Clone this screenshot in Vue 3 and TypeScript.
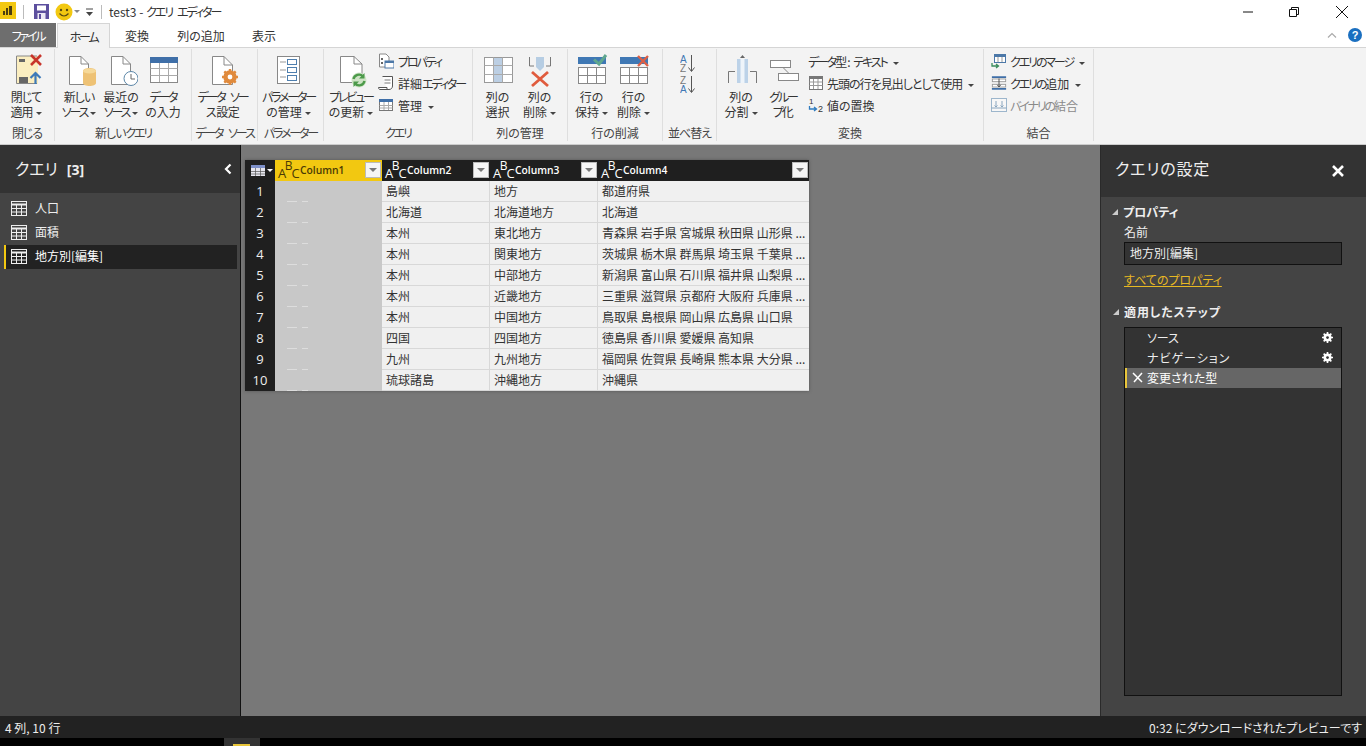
<script setup lang="ts">
interface Row { n: number; a: string; b: string; c: string }
const rows: Row[] = [
  { n: 1, a: '島嶼', b: '地方', c: '都道府県' },
  { n: 2, a: '北海道', b: '北海道地方', c: '北海道' },
  { n: 3, a: '本州', b: '東北地方', c: '青森県 岩手県 宮城県 秋田県 山形県 ...' },
  { n: 4, a: '本州', b: '関東地方', c: '茨城県 栃木県 群馬県 埼玉県 千葉県 ...' },
  { n: 5, a: '本州', b: '中部地方', c: '新潟県 富山県 石川県 福井県 山梨県 ...' },
  { n: 6, a: '本州', b: '近畿地方', c: '三重県 滋賀県 京都府 大阪府 兵庫県 ...' },
  { n: 7, a: '本州', b: '中国地方', c: '鳥取県 島根県 岡山県 広島県 山口県' },
  { n: 8, a: '四国', b: '四国地方', c: '徳島県 香川県 愛媛県 高知県' },
  { n: 9, a: '九州', b: '九州地方', c: '福岡県 佐賀県 長崎県 熊本県 大分県 ...' },
  { n: 10, a: '琉球諸島', b: '沖縄地方', c: '沖縄県' }
]
const cols = ['Column1', 'Column2', 'Column3', 'Column4']
const queries = ['人口', '面積', '地方別[編集]']
</script>

<template>
  <div class="app">
    <header class="titlebar">
      <svg class="logo" width="16" height="17" viewBox="0 0 16 17">
        <rect width="16" height="17" fill="#f2c811" />
        <path d="M3 13V9h2v4zM6 13V6h2v7zM9 13V4h3v9z" fill="#4a3d10" />
      </svg>
      <span class="qsep"></span>
      <svg class="save" width="15" height="15" viewBox="0 0 15 15">
        <path d="M0 0H15V15H0Z" fill="#5c4f9e" />
        <rect x="3" y="1.500" width="9" height="5" fill="#fff" />
        <rect x="3.500" y="9" width="8" height="6" fill="#ece9f5" />
        <rect x="5" y="10" width="2" height="5" fill="#5c4f9e" />
      </svg>
      <svg class="smile" width="18" height="18" viewBox="0 0 18 18">
        <circle cx="9" cy="9" r="8.500" fill="#f2c811" />
        <circle cx="6" cy="7" r="1.200" fill="#5a4a10" />
        <circle cx="12" cy="7" r="1.200" fill="#5a4a10" />
        <path d="M4.500 10.500Q9 15.500 13.500 10.500" fill="none" stroke="#5a4a10" stroke-width="1.200" />
      </svg>
      <span class="caret grey"></span>
      <svg class="custom" width="9" height="8" viewBox="0 0 9 8"><path d="M1 1H8" stroke="#444" /><path d="M1 4H8L4.500 8Z" fill="#444" /></svg>
      <span class="qsep wide"></span>
      <span class="wintitle">test3 - <span class="k">クエリ エディター</span></span>
      <span class="spacer"></span>
      <svg class="winbtn" width="12" height="12" viewBox="0 0 12 12"><path d="M1 6H11" stroke="#111" /></svg>
      <svg class="winbtn" width="12" height="12" viewBox="0 0 12 12"><path d="M1.500 3.500H8.500V10.500H1.500ZM3.500 3.500V1.500H10.500V8.500H8.500" fill="none" stroke="#111" /></svg>
      <svg class="winbtn close" width="14" height="14" viewBox="0 0 14 14"><path d="M1 1L13 13M13 1L1 13" stroke="#111" /></svg>
    </header>

    <nav class="tabs">
      <span class="tab file k">ファイル</span>
      <span class="tab home k">ホーム</span>
      <span class="tab t3">変換</span>
      <span class="tab t4">列の追加</span>
      <span class="tab t5">表示</span>
      <span class="spacer"></span>
      <svg class="collapse" width="10" height="6" viewBox="0 0 10 6"><path d="M1 5.500L5 1.500L9 5.500" fill="none" stroke="#aaa" stroke-width="1.200" /></svg>
      <span class="help">?</span>
    </nav>

    <section class="ribbon">
      <div class="group g1">
        <div class="body center">
          <button class="big">
            <svg width="34" height="34" viewBox="0 0 34 34">
              <rect x="7" y="2" width="22" height="28" fill="#fbeec0" />
              <path d="M28 2H7.500V29.500H28" fill="none" stroke="#888" />
              <rect x="10" y="5" width="6" height="3" fill="#666" />
              <rect x="10" y="23" width="9" height="6" fill="#666" />
              <path d="M22 1L32 11M32 1L22 11" stroke="#c8352b" stroke-width="2.600" />
              <path d="M26.500 30V19M21.500 24L26.500 19L31.500 24" fill="none" stroke="#3d7ab8" stroke-width="2.200" />
            </svg>
            <span class="m">閉じて<br />適用<i class="caret"></i></span>
          </button>
        </div>
        <div class="label m">閉じる</div>
      </div>

      <div class="group g2">
        <div class="body center">
          <button class="big">
            <svg width="34" height="34" viewBox="0 0 34 34">
              <path d="M7.500 2.500H19L26.500 10V30.500H7.500Z" fill="#fff" stroke="#888" />
              <path d="M19 2.500V10H26.500" fill="none" stroke="#888" />
              <path d="M21 17C21 13 34 13 34 17V29C34 33 21 33 21 29Z" fill="#eec275" />
              <ellipse cx="27.500" cy="17" rx="6.500" ry="2.500" fill="#f6d999" />
            </svg>
            <span class="m">新しい<br /><span class="k">ソース</span><i class="caret"></i></span>
          </button>
          <button class="big">
            <svg width="34" height="34" viewBox="0 0 34 34">
              <path d="M7.500 2.500H19L26.500 10V30.500H7.500Z" fill="#fff" stroke="#888" />
              <path d="M19 2.500V10H26.500" fill="none" stroke="#888" />
              <circle cx="27" cy="24.500" r="7" fill="#fff" stroke="#5d87a8" />
              <path d="M27 20V25H31" fill="none" stroke="#666" />
            </svg>
            <span>最近の<br /><span class="k">ソース</span><i class="caret"></i></span>
          </button>
          <button class="big">
            <svg width="34" height="34" viewBox="0 0 34 34">
              <rect x="4.500" y="3.500" width="27" height="25" fill="#fff" stroke="#888" />
              <rect x="4" y="3" width="28" height="6" fill="#3f6fa8" />
              <path d="M4.500 14.500H31.500M4.500 21.500H31.500M13.500 9V28M22.500 9V28" stroke="#aaa" />
            </svg>
            <span><span class="k">データ</span><br />の入力</span>
          </button>
        </div>
        <div class="label m">新しい<span class="k">クエリ</span></div>
      </div>

      <div class="group g3">
        <div class="body center">
          <button class="big wide">
            <svg width="34" height="34" viewBox="0 0 34 34">
              <path d="M6.500 2.500H18L26.500 11V30.500H6.500Z" fill="#fff" stroke="#888" />
              <path d="M18 2.500V11H26.500" fill="none" stroke="#888" />
              <circle cx="24" cy="23" r="5" fill="#fff" stroke="#e08a3c" stroke-width="3.400" />
              <path d="M24 15V31M16 23H32M18.300 17.300L29.700 28.700M29.700 17.300L18.300 28.700" stroke="#e08a3c" stroke-width="2.400" />
              <circle cx="24" cy="23" r="2.400" fill="#fff" />
            </svg>
            <span class="k">データ ソー<br /><span class="m">ス設定</span></span>
          </button>
        </div>
        <div class="label k">データ ソース</div>
      </div>

      <div class="group g4">
        <div class="body center">
          <button class="big wide">
            <svg width="34" height="34" viewBox="0 0 34 34">
              <rect x="5.500" y="2.500" width="22" height="27" fill="#fff" stroke="#888" />
              <path d="M8 8H14M8 16H14M8 23H14" stroke="#999" />
              <rect x="15.500" y="5.500" width="9" height="5" fill="#fff" stroke="#4f7fae" />
              <rect x="15.500" y="13.500" width="9" height="5" fill="#fff" stroke="#4f7fae" />
              <rect x="15.500" y="21.500" width="9" height="5" fill="#fff" stroke="#4f7fae" />
            </svg>
            <span><span class="k">パラメーター</span><br />の管理<i class="caret"></i></span>
          </button>
        </div>
        <div class="label k">パラメーター</div>
      </div>

      <div class="group g5">
        <div class="body row">
          <button class="big first">
            <svg width="34" height="34" viewBox="0 0 34 34">
              <path d="M6.500 2.500H20L28 10V28.500H6.500Z" fill="#fff" stroke="#888" />
              <path d="M20 2.500V10H28" fill="none" stroke="#888" />
              <circle cx="25" cy="26" r="7.500" fill="#cfe3c6" />
              <path d="M19.500 25A5.500 5.500 0 0 1 29 22.500M30.500 27A5.500 5.500 0 0 1 21 29.500" fill="none" stroke="#4c9a4a" stroke-width="2.400" />
              <path d="M30.500 19V24.500H25M19.500 33V27.500H25" fill="#4c9a4a" />
            </svg>
            <span><span class="k">プレビュー</span><br />の更新<i class="caret"></i></span>
          </button>
          <div class="stack s1">
            <div class="small">
              <svg width="16" height="16" viewBox="0 0 16 16">
                <path d="M1.500 1H8L11 4V14H1.500Z" fill="#fff" stroke="#888" />
                <rect x="3" y="5" width="2" height="2" fill="#666" /><rect x="3" y="9" width="2" height="2" fill="#666" />
                <rect x="7" y="8" width="9" height="7" fill="#fff" stroke="#4c78a8" />
                <rect x="7" y="8" width="9" height="2" fill="#4c78a8" />
              </svg>
              <span class="k">プロパティ</span>
            </div>
            <div class="small">
              <svg width="16" height="16" viewBox="0 0 16 16">
                <path d="M4.500 1.500H14.500V11C14.500 13 13 14.500 11 14.500H2C1 14.500 .5 13.500 .5 12.500H9V14" fill="#fff" stroke="#555" />
                <path d="M6.500 5H12.500M6.500 8H12.500" stroke="#777" />
              </svg>
              <span>詳細<span class="k">エディター</span></span>
            </div>
            <div class="small">
              <svg width="16" height="16" viewBox="0 0 16 16">
                <rect x="1.500" y="2.500" width="13" height="11" fill="#fff" stroke="#777" />
                <rect x="1" y="2" width="14" height="3" fill="#3f6fa8" />
                <path d="M1.500 8.500H14.500M1.500 11H14.500M6 5V13M10.500 5V13" stroke="#aaa" />
              </svg>
              <span>管理<i class="caret gap"></i></span>
            </div>
          </div>
        </div>
        <div class="label k">クエリ</div>
      </div>

      <div class="group g6">
        <div class="body center">
          <button class="big">
            <svg width="34" height="34" viewBox="0 0 34 34">
              <rect x="3.500" y="3.500" width="28" height="25" fill="#fff" stroke="#999" />
              <rect x="12" y="4" width="9" height="24" fill="#bccfe4" />
              <path d="M3.500 11.500H31.500M3.500 20.500H31.500M12.500 3.500V28.500M21.500 3.500V28.500" stroke="#aaa" />
            </svg>
            <span>列の<br />選択</span>
          </button>
          <button class="big">
            <svg width="34" height="34" viewBox="0 0 34 34">
              <path d="M6.500 3V12H11M27.500 3V12H23" fill="none" stroke="#777" />
              <path d="M13 3H21V13L17 17L13 13Z" fill="#b6cde3" />
              <path d="M9 18L25 32M25 18L9 32" stroke="#e05b3d" stroke-width="2.800" />
            </svg>
            <span>列の<br />削除<i class="caret"></i></span>
          </button>
        </div>
        <div class="label">列の管理</div>
      </div>

      <div class="group g7">
        <div class="body center">
          <button class="big">
            <svg width="34" height="34" viewBox="0 0 34 34">
              <rect x="3" y="3" width="28" height="7" fill="#3f78b4" />
              <rect x="3.500" y="13.500" width="27" height="16" fill="#fff" stroke="#888" />
              <path d="M3.500 21.500H30.500M12.500 13.500V29.500M21.500 13.500V29.500" stroke="#888" />
              <path d="M19 5.500L24 10L31 1" fill="none" stroke="#5fa78f" stroke-width="3" />
            </svg>
            <span>行の<br />保持<i class="caret"></i></span>
          </button>
          <button class="big">
            <svg width="34" height="34" viewBox="0 0 34 34">
              <rect x="3" y="3" width="28" height="7" fill="#3f78b4" />
              <rect x="3.500" y="13.500" width="27" height="16" fill="#fff" stroke="#888" />
              <path d="M3.500 21.500H30.500M12.500 13.500V29.500M21.500 13.500V29.500" stroke="#888" />
              <path d="M21 2L31 12M31 2L21 12" stroke="#dd5f45" stroke-width="2.400" />
            </svg>
            <span>行の<br />削除<i class="caret"></i></span>
          </button>
        </div>
        <div class="label">行の削減</div>
      </div>

      <div class="group g8">
        <div class="body sort">
          <svg width="16" height="20" viewBox="0 0 16 20">
            <text x="0" y="8.500" class="sa">A</text><text x="0" y="18" class="sz">Z</text>
            <path d="M11.500 1V17M8.500 13.500L11.500 17.500L14.500 13.500" fill="none" stroke="#555" />
          </svg>
          <svg width="16" height="20" viewBox="0 0 16 20">
            <text x="0" y="8.500" class="sz">Z</text><text x="0" y="18" class="sa">A</text>
            <path d="M11.500 1V17M8.500 13.500L11.500 17.500L14.500 13.500" fill="none" stroke="#555" />
          </svg>
        </div>
        <div class="label m">並べ替え</div>
      </div>

      <div class="group g9">
        <div class="body row">
          <button class="big">
            <svg width="34" height="34" viewBox="0 0 34 34">
              <path d="M4.500 29V17.500H11M32.500 29V17.500H26" fill="none" stroke="#777" />
              <rect x="13" y="5" width="11" height="24" fill="#bcd2e8" />
              <rect x="16.500" y="5" width="4" height="24" fill="#eef4fa" />
              <path d="M18.500 1L16 4H21Z" fill="#666" />
            </svg>
            <span>列の<br />分割<i class="caret"></i></span>
          </button>
          <button class="big">
            <svg width="34" height="34" viewBox="0 0 34 34">
              <rect x="4.500" y="6.500" width="20" height="7" fill="#fff" stroke="#888" />
              <rect x="12.500" y="19.500" width="20" height="7" fill="#fff" stroke="#888" />
              <path d="M17 13.500L23 19.500" stroke="#888" />
            </svg>
            <span class="k">グルー<br />プ<span class="plain">化</span></span>
          </button>
          <div class="stack s2">
            <div class="small"><span><span class="k">データ</span>型: <span class="k">テキスト</span><i class="caret gap"></i></span></div>
            <div class="small">
              <svg width="16" height="16" viewBox="0 0 16 16">
                <rect x="1.500" y="1.500" width="13" height="13" fill="#fff" stroke="#777" />
                <rect x="1" y="1" width="14" height="3" fill="#777" />
                <path d="M1.500 7H14.500M1.500 10.500H14.500M5.500 4V14M10 4V14" stroke="#999" />
              </svg>
              <span class="m">先頭の行を見出しとして使用<i class="caret gap"></i></span>
            </div>
            <div class="small">
              <svg width="16" height="16" viewBox="0 0 16 16">
                <text x="1" y="7" class="n1">1</text>
                <text x="10" y="15" class="n2">2</text>
                <path d="M1.500 9V12H8M6 10L8.500 12L6 14" fill="none" stroke="#2f7cc0" stroke-width="1.300" />
              </svg>
              <span>値の置換</span>
            </div>
          </div>
        </div>
        <div class="label">変換</div>
      </div>

      <div class="group g10">
        <div class="body">
          <div class="stack s3">
            <div class="small">
              <svg width="16" height="16" viewBox="0 0 16 16">
                <rect x="3.500" y="1.500" width="11" height="8" fill="#fff" stroke="#4c78a8" />
                <rect x="3" y="1" width="12" height="3" fill="#4c78a8" />
                <path d="M7 4V9M11 4V9" stroke="#999" />
                <path d="M1 10V13H7M5 11L7.500 13L5 15" fill="none" stroke="#3a8c5c" stroke-width="1.300" />
              </svg>
              <span class="k">クエリのマージ<i class="caret gap"></i></span>
            </div>
            <div class="small">
              <svg width="16" height="16" viewBox="0 0 18 16">
                <path d="M1 1.500H17M1 14.500H17" stroke="#3f6fa8" stroke-width="2" />
                <rect x="1.500" y="3.500" width="15" height="3" fill="#fff" stroke="#999" />
                <rect x="1.500" y="9.500" width="15" height="3" fill="#fff" stroke="#999" />
                <path d="M9 3V12M7 10L9 12.500L11 10" fill="none" stroke="#444" />
              </svg>
              <span><span class="k">クエリの</span>追加<i class="caret gap"></i></span>
            </div>
            <div class="small off">
              <svg width="16" height="16" viewBox="0 0 16 16">
                <rect x=".5" y="1.500" width="15" height="13" fill="#f7f7f7" stroke="#9db6cc" />
                <path d="M.5 11H15.500M5 4V10M3.500 8.500L5 10L6.500 8.500M11 4V10M9.500 8.500L11 10L12.500 8.500" fill="none" stroke="#8aa6bf" />
              </svg>
              <span><span class="k">バイナリの</span>結合</span>
            </div>
          </div>
        </div>
        <div class="label">結合</div>
      </div>
    </section>

    <main class="main">
      <aside class="left">
        <div class="lhead">
          <span class="ltitle">クエリ<b>[3]</b></span>
          <svg width="8" height="12" viewBox="0 0 8 12"><path d="M6.500 1.500L2 6L6.500 10.500" fill="none" stroke="#fff" stroke-width="2.200" /></svg>
        </div>
        <ul class="qlist">
          <li v-for="(q, i) in queries" :key="q" :class="{ sel: i === 2 }">
            <svg width="16" height="15" viewBox="0 0 16 15">
              <rect x=".5" y=".5" width="15" height="14" fill="none" stroke="#eee" />
              <path d="M.5 3.500H15.500" stroke="#eee" stroke-width="2" />
              <path d="M.5 7.500H15.500M.5 11H15.500M5.500 3V14.500M10.500 3V14.500" stroke="#eee" />
            </svg>
            <span>{{ q }}</span>
          </li>
        </ul>
      </aside>

      <div class="center-pane">
        <div class="grid">
          <div class="hcorner">
            <svg width="14" height="11" viewBox="0 0 14 11">
              <rect width="14" height="11" fill="#e6e6ee" />
              <rect width="14" height="3" fill="#7d8fc8" />
              <path d="M0 6.500H14M0 9H14M4.500 3V11M9.500 3V11" stroke="#555" stroke-width=".7" />
            </svg>
            <i class="caret white"></i>
          </div>
          <div v-for="(c, i) in cols" :key="c" class="hcell" :class="{ active: i === 0 }">
            <span class="abc"><em>A</em><em class="up">B</em><em>C</em></span>
            <span class="cname">{{ c }}</span>
            <span class="filter"><i></i></span>
          </div>
          <template v-for="r in rows" :key="r.n">
            <div class="num">{{ r.n }}</div>
            <div class="cell redact"></div>
            <div class="cell">{{ r.a }}</div>
            <div class="cell">{{ r.b }}</div>
            <div class="cell last">{{ r.c }}</div>
          </template>
        </div>
      </div>

      <aside class="right">
        <div class="rhead">
          <span>クエリの設定</span>
          <svg width="12" height="12" viewBox="0 0 12 12"><path d="M1 1L11 11M11 1L1 11" stroke="#fff" stroke-width="2.600" /></svg>
        </div>
        <div class="rbody">
          <div class="sect"><i class="tri"></i>プロパティ</div>
          <div class="fname">名前</div>
          <div class="input">地方別[編集]</div>
          <a class="link">すべてのプロパティ</a>
          <div class="sect second"><i class="tri"></i>適用したステップ</div>
          <div class="steps">
            <div class="step">
              <span>ソース</span>
              <svg class="gear" width="11" height="11" viewBox="0 0 12 12"><circle cx="6" cy="6" r="3.200" fill="none" stroke="#fff" stroke-width="2.400" /><path d="M6 0V12M0 6H12M1.800 1.800L10.200 10.200M10.200 1.800L1.800 10.200" stroke="#fff" stroke-width="1.800" /><circle cx="6" cy="6" r="1.500" fill="#333" /></svg>
            </div>
            <div class="step">
              <span class="wider">ナビゲーション</span>
              <svg class="gear" width="11" height="11" viewBox="0 0 12 12"><circle cx="6" cy="6" r="3.200" fill="none" stroke="#fff" stroke-width="2.400" /><path d="M6 0V12M0 6H12M1.800 1.800L10.200 10.200M10.200 1.800L1.800 10.200" stroke="#fff" stroke-width="1.800" /><circle cx="6" cy="6" r="1.500" fill="#333" /></svg>
            </div>
            <div class="step cur">
              <svg width="11" height="11" viewBox="0 0 11 11"><path d="M1 1L10 10M10 1L2 10" stroke="#fff" stroke-width="1.500" /></svg>
              <span>変更された型</span>
            </div>
          </div>
        </div>
      </aside>
    </main>

    <footer class="status">
      <span>4 列, 10 行</span>
      <span>0:32 にダウンロードされたプレビューです</span>
    </footer>
    <div class="taskbar"><span class="task"><i></i></span></div>
  </div>
</template>

<style scoped>
.app {
  width: 1366px;
  height: 746px;
  overflow: hidden;
  display: flex;
  flex-direction: column;
  background: #fff;
  font: 12px/15px "Noto Sans CJK JP", "Noto Sans", sans-serif;
  font-feature-settings: "palt";
  color: #444;
}
.spacer { flex: 1; }
.k { letter-spacing: -2.200px; word-spacing: 5px; }
.m { letter-spacing: -1px; }
.k .m, .k .plain { letter-spacing: -.5px; }
.small .k, .label.k { letter-spacing: -2.100px; }

.titlebar {
  height: 23px;
  flex: none;
  display: flex;
  align-items: center;
  padding-right: 17px;
}
.logo { margin-top: -2px; }
.qsep { width: 1px; height: 14px; background: #bbb; margin: 0 10px 0 7px; }
.qsep.wide { margin: 0 7px 0 7px; }
.save { margin-right: 6px; }
.custom { margin-left: 5px; }
.wintitle { color: #333; font-size: 12px; white-space: nowrap; }
.wintitle .k { letter-spacing: -2px; word-spacing: 4px; }
.winbtn { margin-left: 34px; }
.winbtn.close { margin-left: 35px; }

.caret {
  display: inline-block;
  width: 0;
  height: 0;
  border: 3px solid transparent;
  border-top: 3px solid #444;
  border-bottom: 0;
  margin-left: 3px;
  vertical-align: 2px;
}
.caret.gap { margin-left: 6px; }
.caret.grey { border-top-color: #888; margin-left: 1px; }
.caret.white { border-top-color: #fff; margin-left: 2px; vertical-align: 0; }

.tabs {
  height: 25px;
  flex: none;
  display: flex;
  align-items: stretch;
  border-bottom: 1px solid #d5d5d5;
  box-sizing: border-box;
  padding-right: 4px;
}
.tab { display: flex; align-items: center; justify-content: center; color: #333; }
.tab.file { width: 56px; background: #6e6e6e; color: #fff; margin-right: 1px; }
.tab.home {
  width: 53px;
  background: #f3f3f3;
  border: 1px solid #d5d5d5;
  border-bottom: 0;
  height: 25px;
  box-sizing: border-box;
}
.tab.t3 { width: 54px; }
.tab.t4 { width: 60px; margin-left: 7px; }
.tab.t5 { width: 52px; margin-left: 7px; }
.collapse { align-self: center; margin-right: 11px; }
.help {
  align-self: center;
  width: 14px;
  height: 14px;
  border-radius: 50%;
  background: #1a6fc0;
  color: #fff;
  font: bold 11px/14px "Liberation Sans", sans-serif;
  text-align: center;
}

.ribbon {
  height: 97px;
  flex: none;
  background: #f3f3f3;
  display: flex;
  padding-top: 1px;
  box-sizing: border-box;
  border-bottom: 1px solid #ccc;
}
.group {
  flex: none;
  box-sizing: border-box;
  height: 92px;
  border-right: 1px solid #dedede;
  display: flex;
  flex-direction: column;
}
.g1 { width: 55px; }
.g2 { width: 137px; }
.g3 { width: 66px; }
.g4 { width: 66px; }
.g5 { width: 149px; }
.g6 { width: 95px; }
.g7 { width: 95px; }
.g8 { width: 54px; }
.g9 { width: 267px; }
.g10 { width: 110px; }
.body { height: 76px; display: flex; }
.body.center { justify-content: center; }
.g1 .body { padding-right: 2px; }
.g2 .body, .g3 .body, .g4 .body { padding-right: 4px; }
.g6 .body { padding-right: 3px; }
.g7 .body { padding-right: 5px; }
.g8 .body { padding-right: 3px; }
.body.row { padding-left: 3px; }
.g5 .body.row { padding-left: 2px; }
.label { height: 16px; line-height: 16px; text-align: center; color: #444; white-space: nowrap; }

.big {
  all: unset;
  width: 42px;
  padding-top: 5px;
  display: flex;
  flex-direction: column;
  align-items: center;
  text-align: center;
  white-space: nowrap;
  color: #333;
}
.big.wide { width: 64px; }
.big.first { width: 50px; margin-right: 2px; }
.big > svg { flex: none; height: 34px; margin-bottom: 1px; }
.big > span { line-height: 15px; }

.stack { display: flex; flex-direction: column; padding-top: 1px; }
.stack.s2 { margin-left: 4px; }
.stack.s3 { margin-left: 7px; }
.small { height: 22px; display: flex; align-items: center; gap: 3px; white-space: nowrap; color: #333; }
.s1 .small { gap: 4px; }
.small.off { color: #8a8a8a; }

.sort { flex-direction: column; align-items: center; padding-top: 5px; gap: 1px; }
.sort text { font: 10px "Liberation Sans", sans-serif; }
.sa { fill: #3f78b4; }
.sz { fill: #777; }
.n1, .n2 { font: 8px "Liberation Sans", sans-serif; fill: #333; }
.n2 { font-size: 9px; }

.main { flex: 1; display: flex; min-height: 0; background: #787878; }
.left {
  width: 241px;
  flex: none;
  box-sizing: border-box;
  background: #444;
  border-right: 1px solid #111;
  color: #eee;
}
.lhead {
  height: 48px;
  background: #333;
  display: flex;
  align-items: center;
  justify-content: space-between;
  padding: 0 8px 0 15px;
}
.ltitle { font-size: 16px; color: #eee; line-height: 20px; margin-top: -2px; }
.ltitle b { font: 700 14px "Open Sans", sans-serif; margin-left: 9px; }
.qlist { list-style: none; margin: 0; padding: 4px 3px 0 4px; }
.qlist li {
  height: 24px;
  display: flex;
  align-items: center;
  gap: 8px;
  padding-left: 7px;
  padding-bottom: 1px;
  box-sizing: border-box;
}
.qlist li span { margin-top: -2px; }
.qlist li.sel { background: #222; border-left: 2px solid #f2c811; padding-left: 5px; color: #fff; }

.center-pane { flex: 1; padding: 15px 0 0 4px; }
.grid {
  display: grid;
  width: 564px;
  grid-template-columns: 30px 107px 108px 108px 211px;
  grid-auto-rows: 21px;
  box-shadow: 0 0 3px #555;
}
.hcorner { background: #1f1f1f; display: flex; align-items: center; padding-left: 6px; }
.hcell {
  background: #1f1f1f;
  color: #fff;
  display: flex;
  align-items: center;
  padding: 0 1px 1px 3px;
  font: 600 10.300px "Open Sans", sans-serif;
}
.hcell.active { background: #f2c811; color: #4a3a05; }
.abc { width: 19px; display: flex; font: 13px/12px "Open Sans", sans-serif; margin-right: 3px; padding-top: 6px; }
.abc em { font-style: normal; width: 6.800px; }
.abc em.up { margin-top: -7px; font-size: 12px; }
.cname { flex: 1; }
.filter {
  width: 16px;
  height: 16px;
  background: #f5f5f5;
  border: 1px solid #bbb;
  box-sizing: border-box;
  display: flex;
  align-items: center;
  justify-content: center;
}
.filter i { border: 4px solid transparent; border-top: 4px solid #777; border-bottom: 0; }
.num {
  background: #1f1f1f;
  color: #eee;
  text-align: center;
  font: 13px/21px "Open Sans", sans-serif;
}
.cell {
  background: #f0f0f0;
  border-bottom: 1px solid #d8d8d8;
  border-right: 1px solid #d8d8d8;
  padding: 0 0 0 4px;
  line-height: 20px;
  white-space: nowrap;
  overflow: hidden;
  color: #333;
  font-feature-settings: normal;
}
.cell.last { border-right: 0; }
.cell.redact {
  background:
    linear-gradient(90deg, transparent 12px, #ddd 12px, #ddd 22px, transparent 22px, transparent 27px, #ddd 27px, #ddd 33px, transparent 33px) bottom / 100% 1px no-repeat,
    #c8c8c8;
  border: 0;
}

.right {
  width: 266px;
  flex: none;
  box-sizing: border-box;
  background: #444;
  border-left: 1px solid #2a2a2a;
  color: #eee;
  display: flex;
  flex-direction: column;
}
.rhead {
  height: 52px;
  flex: none;
  background: #333;
  display: flex;
  justify-content: space-between;
  padding: 13px 22px 0 14px;
  box-sizing: border-box;
  font-size: 16px;
  line-height: 20px;
  letter-spacing: .8px;
}
.rhead svg { margin-top: 7px; }
.rbody { flex: 1; padding: 7px 24px 20px 23px; display: flex; flex-direction: column; }
.sect { font-weight: 700; line-height: 15px; color: #eee; position: relative; margin-left: -1px; }
.sect.second { margin-top: 17px; margin-left: 0; letter-spacing: .9px; }
.tri {
  position: absolute;
  left: -11px;
  top: 5px;
  border-style: solid;
  border-width: 0 0 6px 6px;
  border-color: transparent transparent #ccc transparent;
}
.fname { margin-top: 5px; line-height: 15px; }
.input {
  margin-top: 3px;
  height: 23px;
  box-sizing: border-box;
  background: #333;
  border: 1px solid #111;
  padding-left: 5px;
  line-height: 20px;
}
.link { margin-top: 7px; color: #e8b923; text-decoration: underline; line-height: 15px; }
.steps {
  margin-top: 8px;
  flex: 1;
  background: #333;
  border: 1px solid #111;
  box-sizing: border-box;
}
.step {
  height: 20px;
  display: flex;
  align-items: center;
  justify-content: space-between;
  padding: 0 8px 2px 22px;
  box-sizing: border-box;
}
.wider { letter-spacing: 1px; }
.step.cur {
  background: #666;
  border-left: 2px solid #e8c53a;
  justify-content: flex-start;
  gap: 4px;
  padding-left: 5px;
  color: #fff;
}

.status {
  height: 22px;
  flex: none;
  background: #222;
  color: #eee;
  display: flex;
  align-items: center;
  justify-content: space-between;
  padding: 0 4px 0 5px;
}
.taskbar { height: 8px; flex: none; background: #000; padding-left: 224px; }
.task { display: block; width: 36px; height: 100%; background: #333; padding: 6px 0 0 9px; box-sizing: border-box; }
.task i { display: block; width: 17px; height: 2px; background: #e8c53a; }
</style>

<style>
html, body { margin: 0; background: #fff; }
</style>
